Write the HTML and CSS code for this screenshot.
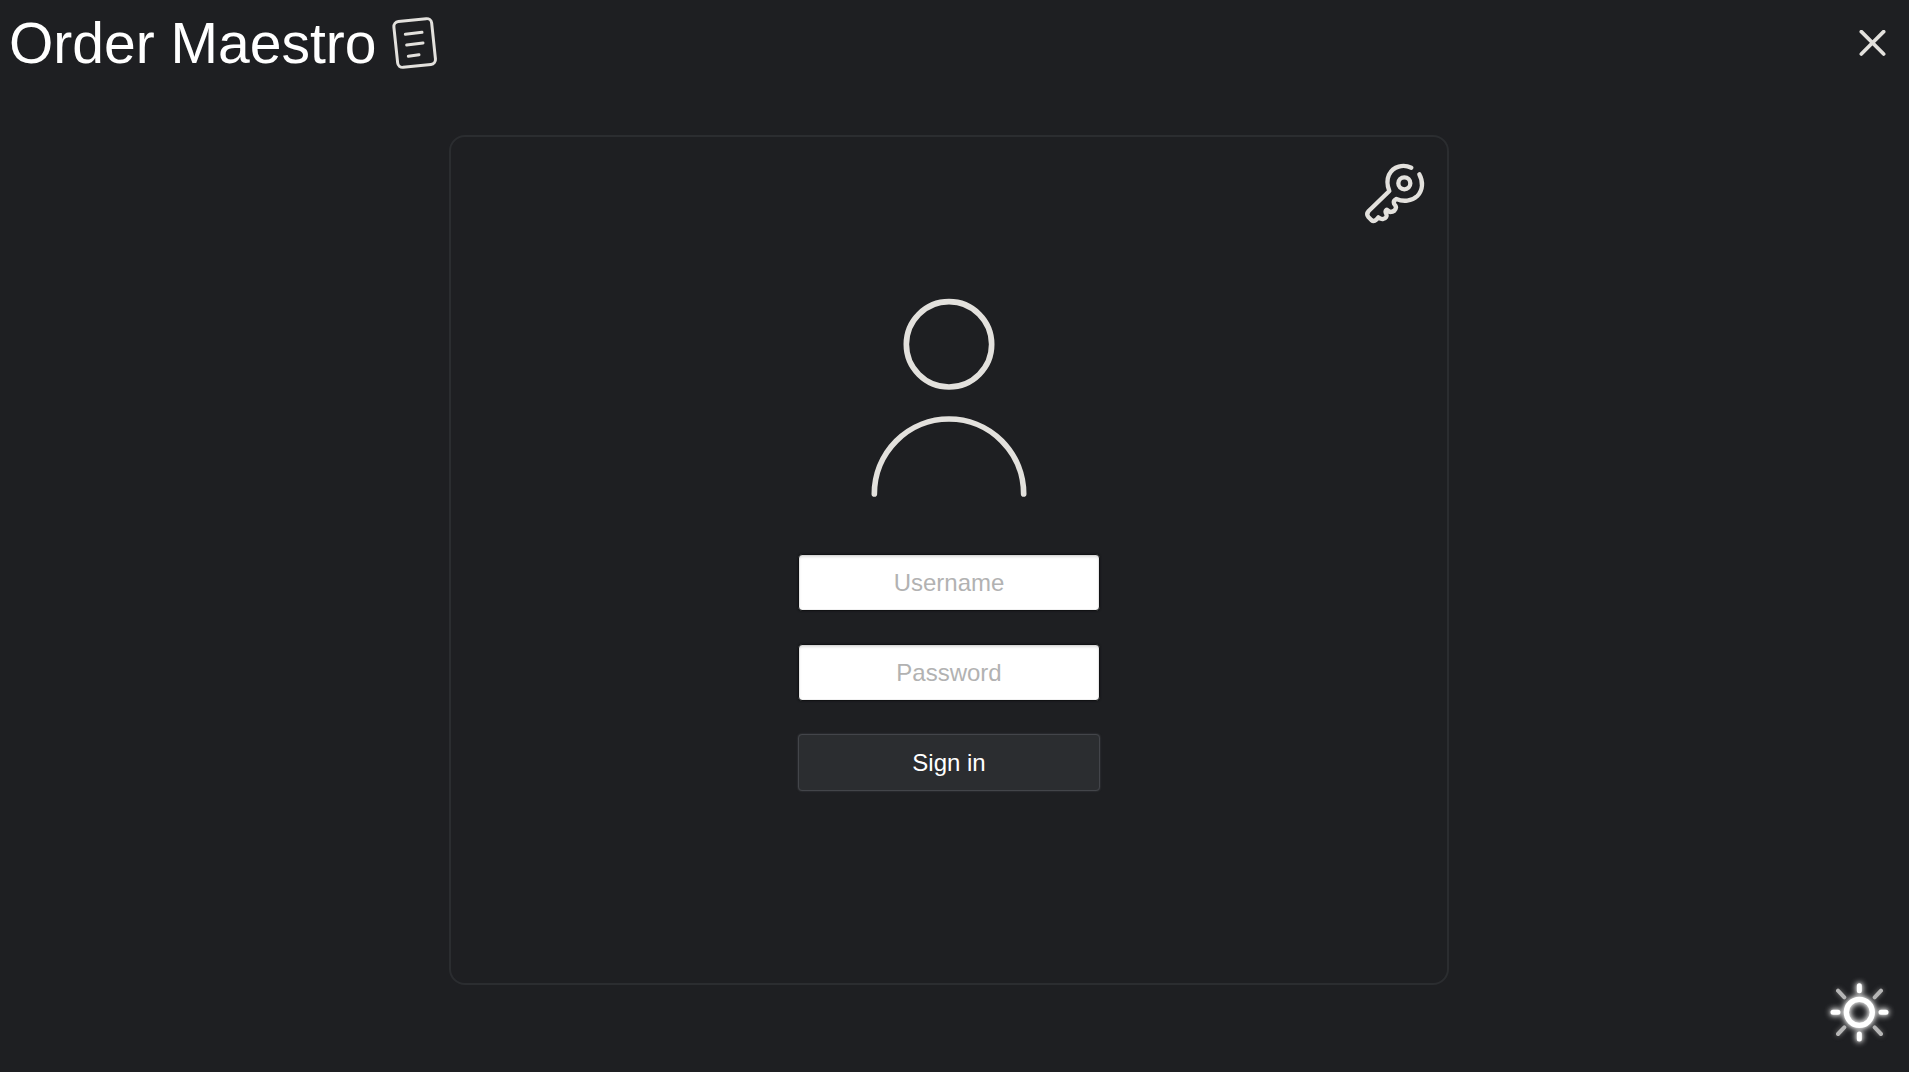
FILE: index.html
```
<!DOCTYPE html>
<html lang="en">
<head>
<meta charset="utf-8">
<meta name="viewport" content="width=device-width, initial-scale=1">
<title>Order Maestro</title>
<link rel="stylesheet" href="styles.css">
</head>
<body>
<header class="topbar">
  <div class="brand">
    <h1 class="brand-name">Order Maestro</h1>
    <svg class="brand-icon" viewBox="1170 45 144 168" aria-hidden="true">
      <rect x="1187" y="60" width="114" height="138" rx="15" transform="rotate(-6 1244 129)" stroke-width="9"/>
      <path d="M1216 103l50-6M1220 135l49-6M1225 169l32-5" stroke-width="9"/>
    </svg>
  </div>
  <button class="icon-button" type="button" aria-label="Close">
    <svg class="close-icon" viewBox="87 59 81 81" aria-hidden="true">
      <path d="M94 64l67 67M161 64l-67 67" stroke-width="11"/>
    </svg>
  </button>
</header>
<main class="page">
  <section class="card">
    <button class="icon-button key-button" type="button" aria-label="Change password">
      <svg class="key-icon" viewBox="69 123 192 192" aria-hidden="true">
        <path d="M214 143C190 132 160 138 147 164C140 180 141 196 148 213L86 273Q78 282 85 291L94 300Q101 306 109 299L115 292Q121 298 129 297Q143 293 139 282Q134 274 140 269Q145 272 150 276Q166 275 168 262Q167 256 162 251Q159 242 169 237C190 246 215 244 232 228C249 211 250 184 238 163" stroke-width="13"/>
        <circle cx="193" cy="190" r="18" stroke-width="13"/>
      </svg>
    </button>
    <svg class="user-icon" viewBox="57 54 480 600" aria-hidden="true">
      <circle cx="297" cy="193" r="128" stroke-width="17"/>
      <path d="M73 642A224 225 0 0 1 521 642" stroke-width="17"/>
    </svg>
    <form class="login">
      <input class="field" type="text" placeholder="Username" aria-label="Username">
      <input class="field" type="password" placeholder="Password" aria-label="Password">
      <button class="submit" type="button">Sign in</button>
    </form>
  </section>
</main>
<button class="icon-button theme-toggle" type="button" aria-label="Toggle theme">
  <svg class="sun-icon" viewBox="39 48 216 216" aria-hidden="true">
    <path class="sun-faint" d="M84 92l19 20M213 92l-19 20M84 222l19-20M213 222l-19-20" stroke-width="12"/>
    <g class="sun-bright">
      <circle cx="148" cy="157" r="39" stroke-width="16"/>
      <path d="M148 77v15M148 222v15M69 157h15M213 157h15" stroke-width="15"/>
    </g>
  </svg>
</button>
</body>
</html>
```
FILE: styles.css
```
* {
  box-sizing: border-box;
}

body {
  margin: 0;
  min-height: 100vh;
  background: #1e1f22;
  color: #fff;
  font-family: "Liberation Sans", Arial, sans-serif;
}

svg {
  display: block;
  fill: none;
  stroke: #e3e1dd;
  stroke-linecap: round;
  stroke-linejoin: round;
}

.topbar {
  display: flex;
  justify-content: space-between;
  align-items: center;
  padding: 11px 23px 0 9px;
}

.brand {
  display: flex;
  align-items: center;
  gap: 14px;
}

.brand-name {
  margin: 0;
  font-size: 57px;
  line-height: 64px;
  font-weight: 400;
}

.brand-icon {
  width: 48px;
  height: 56px;
}

.icon-button {
  padding: 0;
  border: 0;
  background: none;
  cursor: pointer;
}

.close-icon {
  width: 27px;
  height: 27px;
}

.page {
  display: flex;
  justify-content: center;
  padding: 60px 11px 24px 0;
}

.card {
  display: flex;
  flex-direction: column;
  align-items: center;
  width: 100%;
  max-width: 1000px;
  padding: 24px 20px 192px;
  border: 2px solid #2b2d30;
  border-radius: 16px;
}

.key-button {
  align-self: flex-end;
}

.key-icon {
  width: 64px;
  height: 64px;
}

.user-icon {
  width: 160px;
  height: 200px;
  margin: 73px 0 56px;
}

.login {
  display: flex;
  flex-direction: column;
  gap: 33px;
  width: 302px;
}

.field,
.submit {
  width: 100%;
  height: 57px;
  padding: 0 12px;
  border-radius: 4px;
  font-family: inherit;
  font-size: 24px;
  text-align: center;
}

.field {
  border: 1px solid #111214;
  background: #fff;
  color: #1e1f22;
  box-shadow: 0 0 2px #111214, inset 0 0 1px #777, inset 0 2px 3px #ddd;
}

.field::placeholder {
  color: #b2b2b2;
  opacity: 1;
}

.submit {
  border: 1px solid #43454a;
  background: #2b2d30;
  color: #fff;
  box-shadow: 0 0 2px #43454a;
  cursor: pointer;
}

.theme-toggle {
  position: fixed;
  right: 14px;
  bottom: 24px;
}

.sun-icon {
  width: 72px;
  height: 72px;
}

.sun-faint {
  stroke: #b5b5b5;
  filter: drop-shadow(0 0 8px #777);
}

.sun-bright {
  stroke: #fff;
  filter: drop-shadow(0 0 9px #fff) drop-shadow(0 0 5px #999);
}
```
